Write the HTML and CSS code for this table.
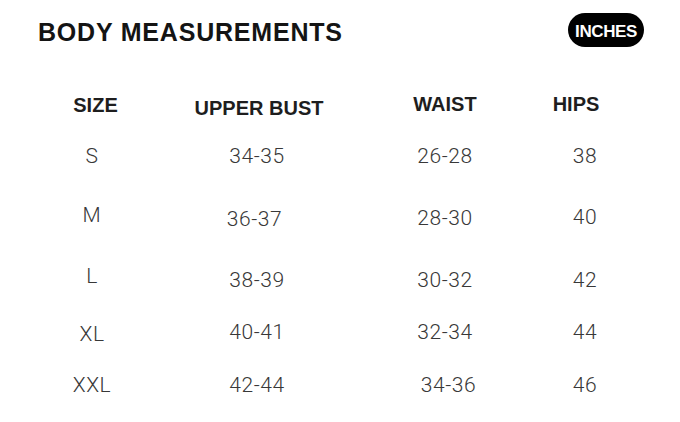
FILE: index.html
```html
<!DOCTYPE html>
<html lang="en">
<head>
<meta charset="utf-8">
<title>Body Measurements</title>
<link rel="stylesheet" href="styles.css">
</head>
<body>
<div class="chart">
  <header class="top">
    <h1 class="title">BODY MEASUREMENTS</h1>
    <span class="pill">INCHES</span>
  </header>
  <div class="table">
    <div class="th th-size">SIZE</div>
    <div class="th th-bust">UPPER BUST</div>
    <div class="th th-waist">WAIST</div>
    <div class="th th-hips">HIPS</div>

    <div class="td">S</div>
    <div class="td">34-35</div>
    <div class="td">26-28</div>
    <div class="td">38</div>

    <div class="td up4">M</div>
    <div class="td dn4 left3">36-37</div>
    <div class="td dn2">28-30</div>
    <div class="td">40</div>

    <div class="td up8">L</div>
    <div class="td">38-39</div>
    <div class="td">30-32</div>
    <div class="td">42</div>

    <div class="td dn4">XL</div>
    <div class="td">40-41</div>
    <div class="td">32-34</div>
    <div class="td">44</div>

    <div class="td">XXL</div>
    <div class="td">42-44</div>
    <div class="td right6">34-36</div>
    <div class="td">46</div>
  </div>
</div>
</body>
</html>
```

FILE: styles.css
```css
html, body {
  margin: 0;
  padding: 0;
  background: #ffffff;
}

.chart {
  width: 680px;
  height: 422px;
  box-sizing: border-box;
  font-family: "Liberation Sans", Arial, sans-serif;
}

.top {
  display: flex;
  justify-content: space-between;
  align-items: center;
  padding: 13px 36px 0 38px;
}

.title {
  margin: 0;
  padding-top: 4px;
  font-size: 25px;
  font-weight: 700;
  letter-spacing: 0.8px;
  color: #141414;
  line-height: 29px;
}

.pill {
  display: inline-flex;
  align-items: center;
  justify-content: center;
  box-sizing: border-box;
  height: 34px;
  width: 76px;
  padding-top: 3px;
  border-radius: 17px;
  background: #000000;
  color: #ffffff;
  font-size: 17px;
  font-weight: 700;
  letter-spacing: -0.4px;
}

.table {
  display: grid;
  margin: 33px 0 0 42px;
  grid-template-columns: 100px 230px 146px 134px;
  grid-template-rows: 50px 51px 72px 54px 50px 56px;
  align-items: center;
  text-align: center;
}

.th {
  font-size: 20px;
  font-weight: 700;
  color: #1e1e1e;
  line-height: 24px;
}

.th-size { padding-left: 7px; }
.th-bust { padding-left: 4px; padding-top: 5px; }
.th-waist { padding-bottom: 3px; }
.th-hips { padding-right: 18px; padding-bottom: 3px; }

.td {
  font-family: Roboto, "Liberation Sans", sans-serif;
  font-size: 21px;
  font-weight: 300;
  letter-spacing: 0.6px;
  color: #383838;
  line-height: 24px;
}

.up4 { padding-bottom: 4px; }
.up8 { padding-bottom: 9px; }
.dn2 { padding-top: 2px; }
.dn4 { padding-top: 4px; }
.left3 { padding-right: 5px; }
.right6 { padding-left: 7px; }
```
